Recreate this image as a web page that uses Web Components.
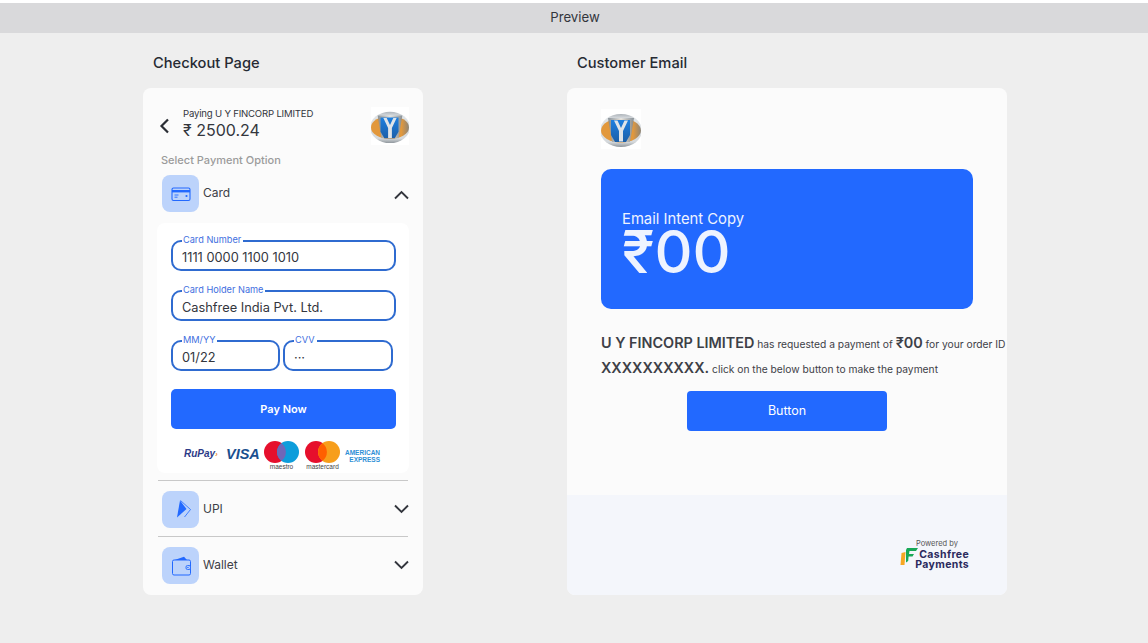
<!DOCTYPE html>
<html>
<head>
<meta charset="utf-8">
<title>Preview</title>
<style>
    html, body { margin: 0; padding: 0; height: 100%; }
    body { background: #eeeeee; font-family: "Inter", "Liberation Sans", sans-serif; color: #33363d; overflow: hidden; }
</style>
</head>
<body>
<preview-page>
    <preview-column slot="left" heading="Checkout Page" width="280">
        <checkout-card></checkout-card>
    </preview-column>
    <preview-column slot="right" heading="Customer Email" width="440">
        <email-card></email-card>
    </preview-column>
</preview-page>

<script>
const LOGO = (size) => `
    <svg width="${size}" height="${size}" viewBox="0 0 40 40" style="display:block">
        <defs>
            <linearGradient id="rim" x1="0" y1="0" x2="0" y2="1">
                <stop offset="0" stop-color="#aeb4ba"/><stop offset=".15" stop-color="#dfe3e6"/><stop offset=".85" stop-color="#d5d9dc"/><stop offset="1" stop-color="#8f969c"/>
            </linearGradient>
            <linearGradient id="steel" x1="0" y1="0" x2="1" y2="0">
                <stop offset="0" stop-color="#7f878d"/><stop offset=".5" stop-color="#e6e9eb"/><stop offset="1" stop-color="#7f878d"/>
            </linearGradient>
            <linearGradient id="amber" x1="0" y1="0" x2="1" y2="0">
                <stop offset="0" stop-color="#e2983c"/><stop offset=".8" stop-color="#e2983c"/><stop offset="1" stop-color="#8d8578"/>
            </linearGradient>
            <linearGradient id="blue" x1="0" y1="0" x2="0" y2="1">
                <stop offset="0" stop-color="#1d7fe0"/><stop offset="1" stop-color="#1c5fa8"/>
            </linearGradient>
            <clipPath id="box"><rect width="40" height="40"/></clipPath>
        </defs>
        <rect width="40" height="40" fill="#fff"/>
        <g clip-path="url(#box)">
            <ellipse cx="20" cy="21.5" rx="21" ry="16.5" fill="url(#rim)"/>
            <ellipse cx="20" cy="21.5" rx="20" ry="12" fill="url(#amber)"/>
            <path d="M7 9h26l-4 24H11z" fill="url(#steel)" opacity=".9"/>
            <path d="M10 11h19v15l-4 7H14l-4-7z" fill="url(#blue)"/>
            <path d="M13 11.500h3.500l3.500 7.500 3.500-7.500H27l-5 10.500v10.500h-4V22z" fill="#dfe4e8"/>
        </g>
    </svg>`;

class PreviewPage extends HTMLElement {
    connectedCallback() {
        this.attachShadow({ mode: 'open' });
        this.shadowRoot.innerHTML = `
            <style>
                :host { display: block; padding-top: 3px; background: #fff; height: 640px; }
                .bar {
                    height: 30px;
                    padding: 0 0 2px 2px;
                    box-sizing: border-box;
                    background: #d9d9db;
                    display: flex;
                    align-items: center;
                    justify-content: center;
                    font-size: 13.2px;
                    color: #33363d;
                }
                .body {
                    background: #eeeeee;
                    height: 610px;
                    display: flex;
                    padding-left: 143px;
                    gap: 144px;
                }
            </style>
            <div class="bar">Preview</div>
            <div class="body">
                <slot name="left"></slot>
                <slot name="right"></slot>
            </div>
        `;
    }
}

class PreviewColumn extends HTMLElement {
    connectedCallback() {
        this.attachShadow({ mode: 'open' });
        this.shadowRoot.innerHTML = `
            <style>
                :host { display: block; width: ${this.getAttribute('width')}px; }
                h2 {
                    margin: 0;
                    height: 55px;
                    box-sizing: border-box;
                    padding: 21px 0 0 10px;
                    font-size: 14.7px;
                    line-height: 18px;
                    font-weight: 500;
                    color: #262a33;
                }
            </style>
            <h2>${this.getAttribute('heading')}</h2>
            <slot></slot>
        `;
    }
}

class CheckoutCard extends HTMLElement {
    connectedCallback() {
        this.attachShadow({ mode: 'open' });
        this.shadowRoot.innerHTML = `
            <style>
                :host {
                    display: block;
                    height: 507px;
                    background: #fbfbfb;
                    border-radius: 8px;
                    box-sizing: border-box;
                    overflow: hidden;
                }
                .head { display: flex; height: 60px; padding: 19px 14px 0 16px; box-sizing: border-box; }
                .back { margin: 11px 13px 0 0; }
                .who { flex: 1; }
                .paying { font-size: 9.6px; line-height: 13px; letter-spacing: -.2px; color: #33363d; }
                .amount { font-size: 16px; line-height: 20px; color: #33363d; }
                .select { margin: 6px 0 0 18px; font-size: 11px; line-height: 13px; font-weight: 500; color: #9b9b9b; }
                .form {
                    margin: 11px 14px 0 14px;
                    background: #fff;
                    border-radius: 8px;
                    padding: 17px 13px 0 14px;
                    height: 250px;
                    box-sizing: border-box;
                }
                .split { display: flex; gap: 3px; width: 222px; }
                .split card-field:first-child { width: 109px; flex: none; }
                .split card-field:last-child { width: 110px; flex: none; }
                card-field { margin-bottom: 19px; }
                .pay {
                    height: 40px;
                    margin-top: -1px;
                    background: #2269ff;
                    border-radius: 5px;
                    color: #fff;
                    font-size: 11px;
                    font-weight: 600;
                    display: flex;
                    align-items: center;
                    justify-content: center;
                }
                .rule { height: 1px; background: #c8c8c8; margin: 0 15px; }
                .rule.first { margin-top: 7px; }
            </style>
            <div class="head">
                <svg class="back" width="11" height="16" viewBox="0 0 11 16"><path d="M9 1.5 2.5 8 9 14.5" fill="none" stroke="#2b2e35" stroke-width="2.2"/></svg>
                <div class="who">
                    <div class="paying">Paying U Y FINCORP LIMITED</div>
                    <div class="amount">₹ 2500.24</div>
                </div>
                <div>${LOGO(38)}</div>
            </div>
            <div class="select">Select Payment Option</div>
            <pay-option label="Card" icon="card" open style="margin-top:8px"></pay-option>
            <div class="form">
                <card-field label="Card Number" value="1111 0000 1100 1010"></card-field>
                <card-field label="Card Holder Name" value="Cashfree India Pvt. Ltd."></card-field>
                <div class="split">
                    <card-field label="MM/YY" value="01/22"></card-field>
                    <card-field label="CVV" value="···"></card-field>
                </div>
                <div class="pay">Pay Now</div>
                <brand-row></brand-row>
            </div>
            <div class="rule first"></div>
            <pay-option label="UPI" icon="upi" style="margin-top:10px"></pay-option>
            <div class="rule" style="margin-top:8px"></div>
            <pay-option label="Wallet" icon="wallet" style="margin-top:10px"></pay-option>
        `;
    }
}

class PayOption extends HTMLElement {
    connectedCallback() {
        const icons = {
            card: `<rect x="1" y="4" width="18" height="12.5" rx="1.5" fill="none" stroke="#2269ff" stroke-width="1.1"/><rect x="1" y="6" width="18" height="2.4" fill="#2269ff"/><path d="M3.5 11h4M3.5 13.2h3" stroke="#2269ff" stroke-width=".9"/><circle cx="15.5" cy="12" r="1.1" fill="#2269ff"/>`,
            upi: `<path d="M6 17.5 9 .5 15.5 9z" fill="#2269ff"/><path d="M9.5 .5 19.5 9.5 13.5 17" fill="none" stroke="#2269ff" stroke-width=".8"/>`,
            wallet: `<path d="M3.500 4 13 .8l3 3.200z" fill="#2269ff"/><rect x="1.500" y="4" width="18" height="15" rx="1.500" fill="none" stroke="#2269ff" stroke-width="1"/><rect x="15" y="9.500" width="4.500" height="4" rx="1.500" fill="#bcd3fb" stroke="#2269ff" stroke-width=".9"/><circle cx="16.900" cy="11.500" r=".7" fill="#2269ff"/>`
        };
        const open = this.hasAttribute('open');
        this.attachShadow({ mode: 'open' });
        this.shadowRoot.innerHTML = `
            <style>
                :host { display: flex; align-items: center; height: 37px; padding: 0 14px 0 19px; }
                .tile {
                    width: 37px; height: 37px;
                    border-radius: 8px;
                    background: #bcd3fb;
                    display: flex; align-items: center; justify-content: center;
                    margin-right: 4px;
                    flex: none;
                }
                .label { flex: 1; font-size: 12px; color: #3d4047; margin-top: -3px; }
                .chev { margin-top: ${open ? 2 : -2}px; }
            </style>
            <div class="tile"><svg width="20" height="20" viewBox="0 0 20 20">${icons[this.getAttribute('icon')]}</svg></div>
            <div class="label">${this.getAttribute('label')}</div>
            <svg class="chev" width="15" height="10" viewBox="0 0 15 10"><path d="${open ? 'M1 8.5 7.5 2 14 8.5' : 'M1 1.5 7.5 8 14 1.5'}" fill="none" stroke="#33363d" stroke-width="1.9"/></svg>
        `;
    }
}

class CardField extends HTMLElement {
    connectedCallback() {
        this.attachShadow({ mode: 'open' });
        this.shadowRoot.innerHTML = `
            <style>
                :host {
                    display: block;
                    position: relative;
                    height: 31px;
                    box-sizing: border-box;
                    border: 2px solid #2f6bd0;
                    border-radius: 10px;
                    padding: 0 9px;
                    font-size: 12.8px;
                    line-height: 32px;
                    color: #33363d;
                }
                .label {
                    position: absolute;
                    left: 9px;
                    top: -8px;
                    padding: 0 2px 0 1px;
                    background: #fff;
                    font-size: 9.2px;
                    line-height: 11px;
                    color: #3f6fe0;
                }
            </style>
            <span class="label">${this.getAttribute('label')}</span>
            <span>${this.getAttribute('value')}</span>
        `;
    }
}

class BrandRow extends HTMLElement {
    connectedCallback() {
        const circles = (a, b, mid) => `
            <svg width="35" height="22" viewBox="0 0 35 22" style="display:block">
                <circle cx="11" cy="11" r="11" fill="${a}"/>
                <circle cx="24" cy="11" r="11" fill="${b}"/>
                <path d="M17.5 2.2a11 11 0 0 1 0 17.6 11 11 0 0 1 0-17.6z" fill="${mid}"/>
            </svg>`;
        this.attachShadow({ mode: 'open' });
        this.shadowRoot.innerHTML = `
            <style>
                :host {
                    display: flex;
                    align-items: flex-start;
                    padding: 12px 0 0 13px;
                    height: 30px;
                    box-sizing: border-box;
                    font-family: "Liberation Sans", sans-serif;
                }
                .rupay { width: 42px; flex: none; font-size: 10px; font-weight: 700; font-style: italic; color: #2d3a87; margin-top: 7px; line-height: 12px; }
                .rupay i { color: #e8882c; font-size: 7px; }
                .visa { width: 38px; flex: none; font-size: 14.5px; font-weight: 700; font-style: italic; color: #1a4f8f; line-height: 16px; margin-top: 5px; }
                .mark { margin-right: 6px; width: 35px; flex: none; }
                .mark + .mark { margin-right: 5px; }
                .mark div { font-size: 6.5px; line-height: 7px; text-align: center; color: #444; margin-top: 0; white-space: nowrap; }
                .amex { font-size: 6.5px; line-height: 6.5px; font-weight: 700; color: #2e8fd6; text-align: right; margin-top: 9px; white-space: nowrap; }
            </style>
            <span class="rupay">RuPay<i>›</i></span>
            <span class="visa">VISA</span>
            <div class="mark">${circles('#e60f2c', '#0d9ddb', '#6f67b8')}<div>maestro</div></div>
            <div class="mark">${circles('#e60f2c', '#f79e1b', '#ff5f00')}<div>mastercard</div></div>
            <div class="amex">AMERICAN<br>EXPRESS</div>
        `;
    }
}

class EmailCard extends HTMLElement {
    connectedCallback() {
        this.attachShadow({ mode: 'open' });
        this.shadowRoot.innerHTML = `
            <style>
                :host {
                    display: flex;
                    flex-direction: column;
                    height: 507px;
                    background: #fbfbfb;
                    border-radius: 8px;
                    overflow: hidden;
                }
                .main { height: 407px; padding: 21px 0 0 34px; box-sizing: border-box; }
                .logo { width: 40px; height: 40px; background: #fff; }
                .hero {
                    margin-top: 20px;
                    width: 372px;
                    height: 140px;
                    box-sizing: border-box;
                    background: #2269ff;
                    border-radius: 10px;
                    padding: 41px 0 0 21px;
                    color: #eef3ff;
                }
                .intent { font-size: 14.8px; line-height: 18px; }
                .big { font-size: 59px; line-height: 50px; font-weight: 500; margin-top: -1px; }
                .copy { margin-top: 23px; font-size: 10.25px; line-height: 24.5px; white-space: nowrap; color: #3d4047; }
                .copy b { font-size: 14.4px; font-weight: 600; line-height: 1; }
                .btn {
                    margin: 10px 0 0 86px;
                    width: 200px;
                    height: 40px;
                    padding-bottom: 1px;
                    box-sizing: border-box;
                    background: #2269ff;
                    border-radius: 4px;
                    color: #fff;
                    font-size: 12.5px;
                    display: flex;
                    align-items: center;
                    justify-content: center;
                }
                .foot {
                    flex: 1;
                    background: #f4f6fb;
                    display: flex;
                    flex-direction: column;
                    align-items: flex-end;
                    padding: 44px 38px 0 0;
                }
            </style>
            <div class="main">
                <div class="logo">${LOGO(40)}</div>
                <div class="hero">
                    <div class="intent">Email Intent Copy</div>
                    <div class="big">₹00</div>
                </div>
                <div class="copy"><b>U Y FINCORP LIMITED</b> has requested a payment of <b>₹00</b> for your order ID<br><b>XXXXXXXXXX.</b> click on the below button to make the payment</div>
                <div class="btn">Button</div>
            </div>
            <div class="foot"><cashfree-mark></cashfree-mark></div>
        `;
    }
}

class CashfreeMark extends HTMLElement {
    connectedCallback() {
        this.attachShadow({ mode: 'open' });
        this.shadowRoot.innerHTML = `
            <style>
                :host { display: block; width: 69px; position: relative; }
                .powered { font-size: 7.5px; line-height: 10px; color: #555; margin-left: 16px; white-space: nowrap; }
                .name { margin-top: 1px; font-size: 10.5px; line-height: 10px; letter-spacing: .35px; font-weight: 700; color: #2b2a5e; white-space: nowrap; text-align: right; }
                svg { position: absolute; left: 0; top: 8px; }
            </style>
            <div class="powered">Powered by</div>
            <svg width="18" height="19" viewBox="0 0 18 19">
                <path d="M1.5 6 5.500 5 4.500 18 .5 18z" fill="#f6a723"/>
                <path d="M6 3 7 1h11l-2 3H9.500L9 7h5l-1.500 2.500H8.600L8.200 14 6 15.500z" fill="#18a957"/>
            </svg>
            <div class="name"><div>Cashfree</div><div>Payments</div></div>
        `;
    }
}

customElements.define('preview-page', PreviewPage);
customElements.define('preview-column', PreviewColumn);
customElements.define('checkout-card', CheckoutCard);
customElements.define('pay-option', PayOption);
customElements.define('card-field', CardField);
customElements.define('brand-row', BrandRow);
customElements.define('email-card', EmailCard);
customElements.define('cashfree-mark', CashfreeMark);
</script>
</body>
</html>
